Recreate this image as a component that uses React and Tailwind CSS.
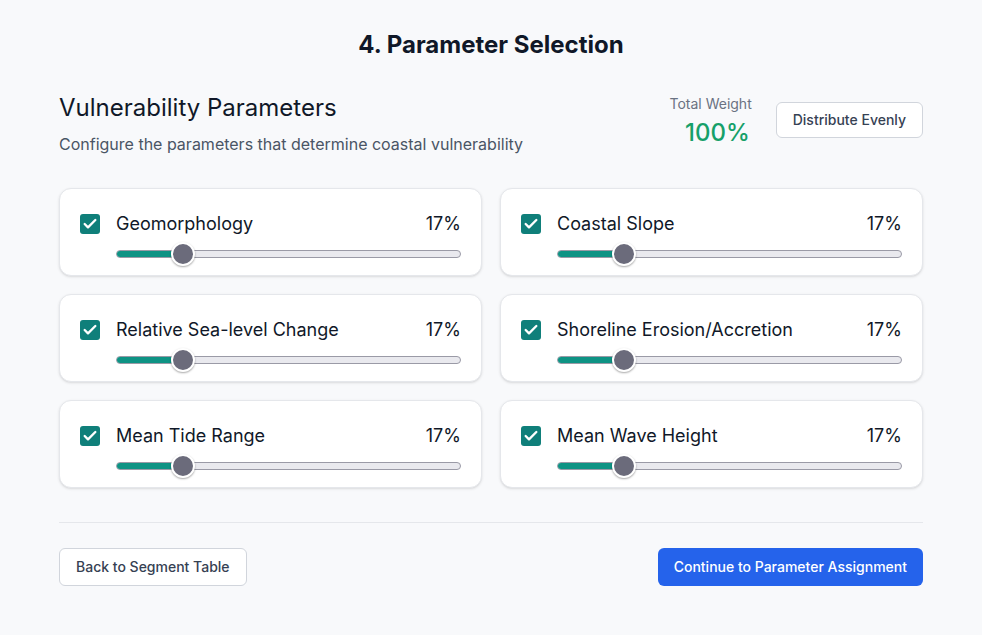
import { Check } from 'lucide-react';

const params = [
    { id: 'geo', name: 'Geomorphology', weight: 17 },
    { id: 'slope', name: 'Coastal Slope', weight: 17 },
    { id: 'sea', name: 'Relative Sea-level Change', weight: 17 },
    { id: 'erosion', name: 'Shoreline Erosion/Accretion', weight: 17 },
    { id: 'tide', name: 'Mean Tide Range', weight: 17 },
    { id: 'wave', name: 'Mean Wave Height', weight: 17 },
];

function Slider({ value }) {
    // native range: thumb center = 12px + value * (track - 24px)
    const pos = `calc(12px + ${value / 100} * (100% - 24px))`;
    return (
        <div className="relative h-6 flex items-center">
            <div className="w-full h-2 rounded-full bg-[#e9e9ee] border border-[#9a9aa6] overflow-hidden">
                <div className="h-full bg-[#0e9384]" style={{ width: pos }} />
            </div>
            <div
                className="absolute top-0 w-6 h-6 -ml-3 rounded-full bg-[#6b6b7b] border-2 border-white shadow-[0_1px_2px_rgba(0,0,0,0.35)]"
                style={{ left: pos }}
            />
        </div>
    );
}

function ParamCard({ p }) {
    return (
        <div className="bg-white border border-gray-200 rounded-xl shadow-sm px-5 pt-[21px] pb-[9px]">
            <div className="flex items-center h-7">
                <div className="w-5 h-5 rounded-[3px] bg-[#0f7f7a] flex items-center justify-center">
                    <Check className="w-4 h-4 text-white" strokeWidth={3.5} />
                </div>
                <span className="ml-4 text-lg text-gray-900">{p.name}</span>
                <span className="ml-auto text-lg text-gray-900">{p.weight}%</span>
            </div>
            <div className="pl-9 mt-1">
                <Slider value={p.weight} />
            </div>
        </div>
    );
}

export default function App() {
    return (
        <div className="min-h-screen bg-[#f8f9fb] font-['Inter',sans-serif] text-gray-900">
            <div className="max-w-4xl mx-auto px-4 pt-[29px] pb-12">
                <h1 className="text-2xl font-bold text-center">4. Parameter Selection</h1>

                <div className="mt-[31px] flex items-start justify-between">
                    <div>
                        <h2 className="text-2xl font-normal">Vulnerability Parameters</h2>
                        <p className="mt-2 text-base text-gray-600">Configure the parameters that determine coastal vulnerability</p>
                    </div>
                    <div className="flex items-start gap-6">
                        <div className="text-right mt-[2px]">
                            <div className="text-sm text-gray-500">Total Weight</div>
                            <div className="mt-[3px] pr-[2px] text-2xl font-medium text-[#16a06a]">100%</div>
                        </div>
                        <button className="mt-[10px] px-4 h-9 rounded-md border border-gray-300 bg-white text-sm font-medium text-gray-700">
                            Distribute Evenly
                        </button>
                    </div>
                </div>

                <div className="mt-8 grid grid-cols-2 gap-[18px]">
                    {params.map((p) => (
                        <ParamCard key={p.id} p={p} />
                    ))}
                </div>

                <div className="mt-[34px] border-t border-gray-200 pt-[25px] flex justify-between">
                    <button className="px-4 h-[38px] rounded-md border border-gray-300 bg-white text-sm font-medium text-gray-700">
                        Back to Segment Table
                    </button>
                    <button className="px-4 h-[38px] rounded-md bg-[#2563eb] text-sm font-medium text-white">
                        Continue to Parameter Assignment
                    </button>
                </div>
            </div>
        </div>
    );
}
